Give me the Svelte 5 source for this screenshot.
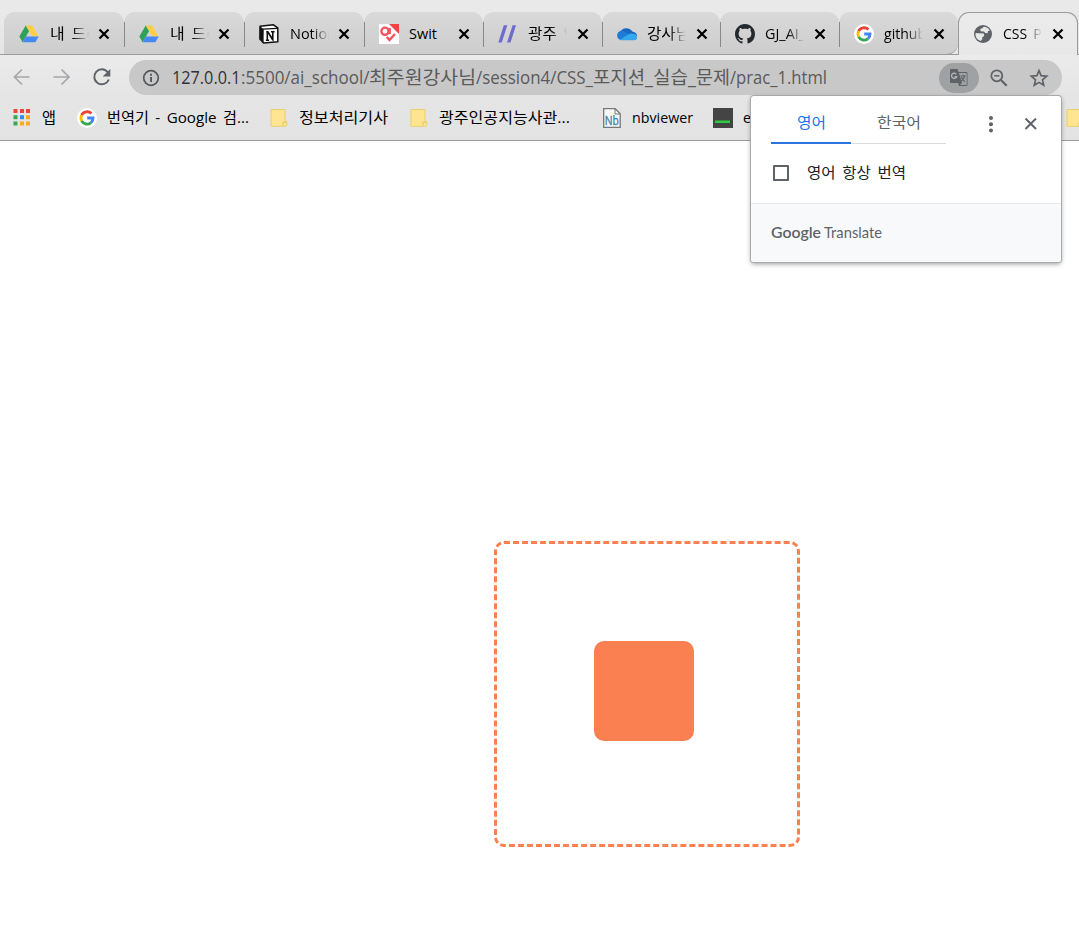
<script>
  const tabs = [
    { icon: 'drive', text: '내 드라', len: 51, w: 120 },
    { icon: 'drive', text: '내 드라', len: 51, w: 120 },
    { icon: 'notion', text: 'Notion', len: 46, w: 120 },
    { icon: 'swit', text: 'Swit', len: 28, w: 119 },
    { icon: 'slashes', text: '광주 인', len: 50, w: 119 },
    { icon: 'cloud', text: '강사님', len: 43, w: 118 },
    { icon: 'github', text: 'GJ_AI_S', len: 48, w: 119 },
    { icon: 'google', text: 'github', len: 42, w: 119 },
    { icon: 'globe', text: 'CSS Po', len: 47, w: 120, active: true }
  ];
  const url = [
    { text: '127.0.0.1', len: 68.5, host: true },
    { text: ':5500/ai_school/', len: 128.5 },
    { text: '최주원강사님', len: 107 },
    { text: '/session4/CSS_', len: 117 },
    { text: '포지션', len: 52 },
    { text: '_', len: 8 },
    { text: '실습', len: 35 },
    { text: '_', len: 8 },
    { text: '문제', len: 34 },
    { text: '/prac_1.html', len: 97 }
  ];
</script>

{#snippet label(text, len, size = 15)}
  <svg class="label" width={len} height="24"><text x="0" y="17" font-size={size} textLength={len} lengthAdjust="spacingAndGlyphs">{text}</text></svg>
{/snippet}

{#snippet icon(name)}
  <svg class="icon" width="20" height="20" viewBox="0 0 20 20">
    {#if name === 'drive'}
      <path d="M6.7 1.5h6.6L19.7 12.5h-6.5z" fill="#ffcf48" />
      <path d="M6.7 1.5 10 7.2 3.6 18.2 .3 12.5z" fill="#30a05a" />
      <path d="M6.9 12.5h12.8l-3.3 5.7H3.6z" fill="#4688f4" />
    {:else if name === 'notion'}
      <path d="M1 2.2 14.5.8l4.3 3v14L4.6 19 .9 15z" fill="#fff" stroke="#111" stroke-width="1.5" stroke-linejoin="round" />
      <path d="M1 2.2 4.7 5.3 4.6 19 .9 15z" fill="#111" />
      <path d="m4 5.2 14.5-.9" stroke="#111" stroke-width="1.3" />
      <path d="M7.2 7.8h1.600l5 7.600V8m-1.900-.2h3.700M8.3 8v8m-1.400.2h3.200M8.800 7.800l5 8.200" fill="none" stroke="#111" stroke-width="1.600" />
    {:else if name === 'swit'}
      <path d="M0 0h20v20H0z" fill="#fff" />
      <path d="M10 0h10v10z" fill="#ef4343" />
      <circle cx="6" cy="7.3" r="3.6" fill="none" stroke="#f5515a" stroke-width="2.300" />
      <path d="M10.600 4v6M7.8 13l2.7 3 5.5-6" fill="none" stroke="#f5515a" stroke-width="2.500" />
    {:else if name === 'slashes'}
      <path d="M5.8 1.3h3.5L3.8 18.6H.3zM14.6 1.3H18l-5.5 17.3H9z" fill="#6d6bd0" />
    {:else if name === 'cloud'}
      <path d="M3 9.200C4 3.500 11.800 2.500 15.800 7.700c3 .2 4.400 2.600 4.200 4.500L9 15z" fill="#1769c4" />
      <path d="M.2 11.5C.2 7 5 5.700 8 7.800l10 7.700-14 .5C1.500 16 .2 13.800.2 11.500z" fill="#1c7cd6" />
      <path d="M2.6 16 11 10.600c2-1.200 4.200-1.500 6-.5 2.500.5 3.300 2 3.200 3.300 0 1.600-1.200 2.800-3 2.800H4.300c-.6 0-1.200 0-1.700-.2z" fill="#36a7ec" />
    {:else if name === 'github'}
      <path transform="scale(1.25)" fill="#24292e" d="M8 0C3.58 0 0 3.58 0 8c0 3.54 2.29 6.53 5.47 7.59.4.07.55-.17.55-.38 0-.19-.01-.82-.01-1.49-2.01.37-2.53-.49-2.69-.94-.09-.23-.48-.94-.82-1.13-.28-.15-.68-.52-.01-.53.63-.01 1.08.58 1.23.82.72 1.21 1.87.87 2.33.66.07-.52.28-.87.51-1.07-1.78-.2-3.64-.89-3.64-3.95 0-.87.31-1.59.82-2.15-.08-.2-.36-1.02.08-2.12 0 0 .67-.21 2.2.82.64-.18 1.32-.27 2-.27s1.36.09 2 .27c1.53-1.04 2.2-.82 2.2-.82.44 1.1.16 1.92.08 2.12.51.56.82 1.27.82 2.15 0 3.07-1.87 3.75-3.65 3.95.29.25.54.73.54 1.48 0 1.07-.01 1.93-.01 2.2 0 .21.15.46.55.38A8.01 8.01 0 0 0 16 8c0-4.42-3.58-8-8-8z" />
    {:else if name === 'google'}
      <circle cx="10" cy="10" r="10" fill="#fff" />
      <g fill="none" stroke-width="2.9">
        <path d="M14.4 5.6A6.1 6.1 0 0 0 4.6 7.2" stroke="#ea4335" />
        <path d="M4.6 7.2a6.1 6.1 0 0 0 0 5.7" stroke="#fbbc05" />
        <path d="M4.6 12.9A6.1 6.1 0 0 0 14 14.6" stroke="#34a853" />
        <path d="M14 14.6A6.1 6.1 0 0 0 16 10h-5.8" stroke="#4285f4" />
      </g>
    {:else if name === 'globe'}
      <circle cx="10" cy="10" r="9" fill="#5f6368" />
      <path d="M10.6 2.7 9.8 4 7.2 5.1l.4 2.1 3.2.2 1.6 1.6 2.2.2.4-2.2 2-.6A8 8 0 0 0 10.6 2.7zM2.500 9l3.200.2 5.100.3.4 2.500-2 1.200.2 1.900-1.800 2A7.800 7.800 0 0 1 2.500 9z" fill="#e8e8e8" />
    {:else if name === 'folder'}
      <path d="M2 1.500h14v12h1.800v3.200q0 1.600-1.600 1.600H2z" fill="#ffe591" stroke="#eccf6b" />
      <path d="M14 18v-3.800h3.300" fill="#ffe591" stroke="#e7c45a" />
    {:else if name === 'nb'}
      <path d="M1.700.7h11.500l5 5v13.600H1.700z" fill="#f7f7f7" stroke="#777" stroke-width="1.300" />
      <path d="M13 1v5h5" fill="none" stroke="#777" />
      <text x="2.800" y="16.500" font-size="13" textLength="14" lengthAdjust="spacingAndGlyphs" fill="#4682b4" stroke="#4682b4" stroke-width=".4">Nb</text>
    {:else if name === 'terminal'}
      <path d="M0 0h20v20H0z" fill="#444" />
      <path d="M2 12.500h15v2.500H2z" fill="#2ecc40" />
    {:else if name === 'apps'}
      <path d="M1.500 1h4v4h-4zM8 1h4v4H8zM14 1h4v4h-4z" fill="#f04438" />
      <path d="M1.500 7.200h4v4h-4z" fill="#34a853" />
      <path d="M8 7.200h4v4H8z" fill="#2f8cf5" />
      <path d="M14 7.200h4v4h-4zM8 13.500h4v4H8zM14 13.500h4v4h-4z" fill="#f9ab1b" />
      <path d="M1.500 13.500h4v4h-4z" fill="#34a853" />
    {/if}
  </svg>
{/snippet}

<div class="window">
  <div class="tabs">
    {#each tabs as t, i}
      <div class="tab" class:active={t.active} class:before={i === 7} style:width="{t.w}px">
        {@render icon(t.icon)}
        <div class="title" class:fade={t.text !== 'Swit'}>{@render label(t.text, t.len)}</div>
        <svg class="close" width="12" height="12" viewBox="0 0 12 12"><path d="m1.500 1.500 9 9m0-9-9 9" stroke="#000" stroke-width="2.200" /></svg>
      </div>
    {/each}
  </div>

  <div class="toolbar">
    <svg class="nav" width="120" height="40" viewBox="0 0 120 40" fill="none">
      <path d="M29.500 22H14.500m7.500-7.500L14.500 22l7.500 7.500M53.500 22h15M61.500 14.500 69 22l-7.500 7.500" stroke="#a6a7a9" stroke-width="1.700" />
      <path d="M107.700 17.200A7.500 7.500 0 1 0 108.800 24.500" stroke="#5f6368" stroke-width="2" />
      <path d="M110.300 14v7.600h-7.600z" fill="#5f6368" />
    </svg>
    <div class="omnibox">
      <svg width="18" height="18" viewBox="0 0 18 18"><circle cx="9" cy="9" r="7.300" fill="none" stroke="#55585c" stroke-width="1.700" /><path d="M8.100 8h1.900v5H8.100zM8.100 4.800h1.900v1.900H8.100z" fill="#55585c" /></svg>
      <div class="url">
        {#each url as u}<span class:host={u.host}>{@render label(u.text, u.len, 18.5)}</span>{/each}
      </div>
      <div class="translate">
        <svg width="20" height="20" viewBox="0 0 20 20">
          <path d="M2 1h6.500l1 3h7.700q1.300 0 1.300 1.300v11.400q0 1.300-1.300 1.300H10l-1-3H2Q1 15 1 14V2q0-1 1-1z" fill="#5f6368" />
          <path d="M9.900 5h7.200q.6 0 .6.600v10.800q0 .7-.6.700h-6l2-2.300z" fill="#a0a1a3" />
          <path d="M7.300 6.300A2.600 2.600 0 1 0 7.600 8.700H5.500" fill="none" stroke="#bbb" stroke-width="1.200" />
          <path d="M11.500 8h5.200m-2.600-1.200V8m1.700 0q-.8 3.200-3.600 5m.1-3.700q1 2.500 3.600 4.300" fill="none" stroke="#5f6368" stroke-width="1.100" />
        </svg>
      </div>
      <svg class="lens" width="18" height="18" viewBox="0 0 18 18" fill="none" stroke="#5f6368"><circle cx="6.800" cy="6.800" r="5.500" stroke-width="1.800" /><path d="m11 11 5.700 5.700" stroke-width="2.200" /><path d="M4.200 6.800h5.200" stroke-width="1.500" /></svg>
      <svg class="star" width="20" height="20" viewBox="0 0 20 20"><path d="m10 2.600 2.100 5 5.600.5-4.200 3.700 1.200 5.500-4.700-2.900-4.700 2.900 1.200-5.500-4.200-3.700 5.600-.5z" fill="none" stroke="#5f6368" stroke-width="1.700" /></svg>
    </div>
  </div>

  <div class="bookmarks">
    <div class="bm apps">{@render icon('apps')}{@render label('앱', 14)}</div>
    <div class="bm search">{@render icon('google')}{@render label('번역기 - Google 검...', 142)}</div>
    <div class="bm exam">{@render icon('folder')}{@render label('정보처리기사', 89)}</div>
    <div class="bm school">{@render icon('folder')}{@render label('광주인공지능사관...', 131)}</div>
    <div class="bm nb">{@render icon('nb')}{@render label('nbviewer', 61)}</div>
    <div class="bm term">{@render icon('terminal')}{@render label('e', 8)}</div>
    <div class="bm last">{@render icon('folder')}</div>
  </div>

  <main>
    <div class="frame"><div class="box"></div></div>
  </main>

  <div class="popup">
    <div class="head">
      <div class="lang selected">{@render label('영어', 29)}</div>
      <div class="lang other">{@render label('한국어', 44)}</div>
      <svg class="dots" width="6" height="20" viewBox="0 0 6 20" fill="#5f6368"><circle cx="3" cy="4" r="2" /><circle cx="3" cy="10.200" r="2" /><circle cx="3" cy="16.400" r="2" /></svg>
      <svg class="dismiss" width="14" height="14" viewBox="0 0 14 14"><path d="m1.500 1.500 10.500 10.500m0-10.500-10.500 10.500" stroke="#5f6368" stroke-width="2" /></svg>
    </div>
    <div class="option"><span class="check"></span>{@render label('영어 항상 번역', 99)}</div>
    <div class="brand"><b>{@render label('Google', 50, 16)}</b>{@render label('Translate', 58, 15)}</div>
  </div>
</div>

<style>
  :global(body) { margin: 0; overflow: hidden; }
  .window {
    position: relative; width: 1079px; height: 925px; overflow: hidden;
    display: flex; flex-direction: column; background: #fff;
    font-family: "Open Sans", "Noto Sans CJK KR", sans-serif; font-weight: 400;
  }
  svg { flex: none; display: block; }
  .label { overflow: visible; fill: currentColor; word-spacing: 2.500px; }
  .tabs {
    box-sizing: border-box; height: 55px; flex: none; display: flex; padding: 12px 0 0 4px;
    background: linear-gradient(#e9e9e9 0 12px, #e5e5e5); border-bottom: 1px solid #9b9b9b;
  }
  .tab {
    position: relative; box-sizing: border-box; height: 42px; flex: none; display: flex; align-items: center;
    padding: 1px 0 0 15px; border-radius: 11px 11px 0 0;
    background: linear-gradient(#d9d9d9, #cdcdcd);
  }
  .tab:not(.active):not(.before)::after {
    content: ""; position: absolute; z-index: 1; right: -1px; top: 10px; width: 1px; height: 25px; background: #888;
  }
  .before { border-radius: 11px 11px 12px 0; border-bottom: 1px solid #9b9b9b; height: 43px; }
  .active {
    height: 43px; background: linear-gradient(#ebebeb, #e8e8e8); border: 1px solid #9b9b9b; border-bottom: 0;
    padding: 0 0 0 14px;
  }
  .title { width: 40px; height: 24px; overflow: hidden; margin-left: 10.500px; }
  .fade { mask-image: linear-gradient(90deg, #000 55%, transparent 98%); }
  .close { margin-left: 8.700px; }
  .tab:nth-child(n + 4) .title { margin-left: 10px; }
  .toolbar {
    height: 42px; flex: none; display: flex; background: linear-gradient(#ebebeb, #e5e5e5);
  }
  .nav { margin-right: 9px; }
  .omnibox {
    box-sizing: border-box; width: 933px; height: 35px; margin-top: 5px; padding-left: 13px;
    display: flex; align-items: center; border-radius: 18px; background: #c8c8c8;
  }
  .url { width: 655px; margin-left: 12px; padding-top: 2px; display: flex; color: #5a5a5b; }
  .host { color: #333; }
  .translate {
    width: 40px; height: 30px; margin-left: 112px; border-radius: 15px; background: #a0a1a3;
    display: flex; align-items: center; justify-content: center;
  }
  .lens { margin-left: 11px; }
  .star { margin-left: 21px; }
  .bookmarks {
    box-sizing: border-box; height: 44px; flex: none; display: flex; align-items: center; padding-left: 12px;
    background: linear-gradient(#e5e5e5, #e3e3e3); border-bottom: 1px solid #9b9b9b; overflow: hidden;
  }
  .bm { display: flex; flex: none; align-items: center; height: 24px; padding-bottom: 1px; }
  .apps { width: 65px; gap: 10px; }
  .search { width: 192px; gap: 10px; }
  .exam { width: 140px; gap: 10px; }
  .school { width: 193px; gap: 10px; }
  .nb { width: 111px; gap: 10px; }
  .term { width: 352px; gap: 10px; }
  main { flex: 1; padding: 400px 0 0 494px; }
  .frame {
    box-sizing: border-box; width: 306px; height: 306px; border: 3px dashed #fa8052; border-radius: 10px;
    display: grid; padding: 97px;
  }
  .box { width: 100px; height: 100px; border-radius: 10px; background: #fa8052; }
  .popup {
    position: absolute; left: 751px; top: 96px; width: 310px; height: 166px; overflow: visible;
    display: flex; flex-direction: column; border-radius: 3px; background: #fff;
    box-shadow: 0 0 0 1px #aaa, 0 2px 5px rgba(0, 0, 0, .4);
  }
  .head { display: flex; height: 48px; padding-left: 20px; }
  .lang { box-sizing: border-box; display: flex; justify-content: center; padding-top: 15px; }
  .selected { width: 80px; color: #1a73e8; border-bottom: 2px solid #2a73e0; }
  .other { width: 95px; color: #5f6368; border-bottom: 1px solid #dadce0; }
  .dots { margin: 18px 0 0 42px; }
  .dismiss { margin: 21px 0 0 30px; }
  .option { box-sizing: border-box; height: 59px; display: flex; align-items: center; padding: 0 0 2px 22px; gap: 18px; color: #202124; }
  .check { width: 12px; height: 12px; border: 2px solid #5f6368; border-radius: 1px; }
  .brand {
    box-sizing: border-box; flex: 1; display: flex; align-items: center; gap: 3px; padding: 0 0 0 20px;
    border-top: 1px solid #e8eaed; border-radius: 0 0 3px 3px; background: #f8f9fb; color: #5f6368;
    font-family: Lato, sans-serif;
  }
  .brand b { font-weight: 600; }
</style>
